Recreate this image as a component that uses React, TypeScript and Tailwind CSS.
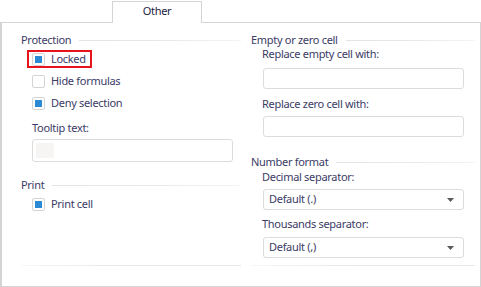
import React from "react";

const Header = ({ title }: { title: string }) => (
  <div className="flex items-center h-[14px]">
    <span className="whitespace-nowrap pr-[8px]">{title}</span>
    <div className="flex-1 h-px bg-linear-to-r from-[#e4e4e4] via-[#e8e8e8] to-[#f4f4f4]" />
  </div>
);

const Check = ({ checked }: { checked: boolean }) => (
  <div className="w-[13px] h-[13px] border border-[#d4d4d4] rounded-[2px] bg-white flex items-center justify-center shrink-0">
    {checked && <div className="w-[7px] h-[7px] bg-[#2b8ad3]" />}
  </div>
);

const Field = ({ children }: { children?: React.ReactNode }) => (
  <div className="w-[201px] h-[21px] border border-[#dcdcdc] rounded-[3px] bg-white flex items-center">
    {children}
  </div>
);

const Select = ({ value }: { value: string }) => (
  <Field>
    <span className="pl-[5px] flex-1">{value}</span>
    <svg width="7" height="4" viewBox="0 0 7 4" className="mr-[9px]">
      <path d="M0 0h7L3.5 4z" fill="#5a5a5a" />
    </svg>
  </Field>
);

const BottomLine = () => (
  <div className="mt-auto mb-[20px] h-px bg-linear-to-r from-[#f6f6f6] via-[#e6e6e6] to-[#e6e6e6]" />
);

export default function App() {
  return (
    <div className="w-[481px] h-[287px] bg-white text-[#3b3b66] text-[11px] tracking-[-0.3px] font-['Noto_Sans',sans-serif] flex flex-col">
      {/* tab strip */}
      <div className="flex h-[23px]">
        <div className="w-[112px] border-b border-[#d4d4d4]" />
        <div className="w-[90px] mt-[1px] border-l border-t border-r border-[#d4d4d4] flex items-center justify-center text-[#22223f] pb-[2px]">
          Other
        </div>
        <div className="flex-1 border-b border-[#d4d4d4]" />
      </div>

      {/* panel */}
      <div className="flex-1 flex border-l-2 border-r border-b border-[#d4d4d4] pl-[19px]">
        {/* left column */}
        <div className="w-[220px] flex flex-col pt-[10px]">
          <Header title="Protection" />
          <div className="mt-[1px] h-[22px] flex items-center ml-[6px]">
            <div className="h-[18px] flex items-center gap-[6px] border-2 border-[#e8141c] pl-[3px] pr-[4px]">
              <Check checked />
              <span>Locked</span>
            </div>
          </div>
          <div className="h-[22px] flex items-center gap-[6px] ml-[11px]">
            <Check checked={false} />
            <span>Hide formulas</span>
          </div>
          <div className="h-[22px] flex items-center gap-[6px] ml-[11px]">
            <Check checked />
            <span>Deny selection</span>
          </div>
          <div className="mt-[7px] h-[14px] flex items-center ml-[11px]">Tooltip text:</div>
          <div className="mt-[4px] ml-[11px]">
            <div className="w-[201px] h-[23px] border border-[#dcdcdc] rounded-[3px] bg-white p-[3px]">
              <div className="w-[18px] h-[15px] bg-[#f7f5f3]" />
            </div>
          </div>
          <div className="mt-[16px]">
            <Header title="Print" />
          </div>
          <div className="mt-[1px] h-[22px] flex items-center gap-[6px] ml-[11px]">
            <Check checked />
            <span>Print cell</span>
          </div>
          <BottomLine />
        </div>

        {/* right column */}
        <div className="w-[224px] ml-[10px] flex flex-col pt-[10px]">
          <Header title="Empty or zero cell" />
          <div className="h-[14px] flex items-center ml-[11px]">Replace empty cell with:</div>
          <div className="mt-[7px] ml-[12px]">
            <Field />
          </div>
          <div className="mt-[8px] h-[14px] flex items-center ml-[11px]">Replace zero cell with:</div>
          <div className="mt-[5px] ml-[12px]">
            <Field />
          </div>
          <div className="mt-[18px]">
            <Header title="Number format" />
          </div>
          <div className="mt-[1px] h-[14px] flex items-center ml-[11px]">Decimal separator:</div>
          <div className="mt-[5px] ml-[12px]">
            <Select value="Default (.)" />
          </div>
          <div className="mt-[7px] h-[14px] flex items-center ml-[11px]">Thousands separator:</div>
          <div className="mt-[6px] ml-[12px]">
            <Select value="Default (,)" />
          </div>
          <BottomLine />
        </div>
      </div>
    </div>
  );
}
